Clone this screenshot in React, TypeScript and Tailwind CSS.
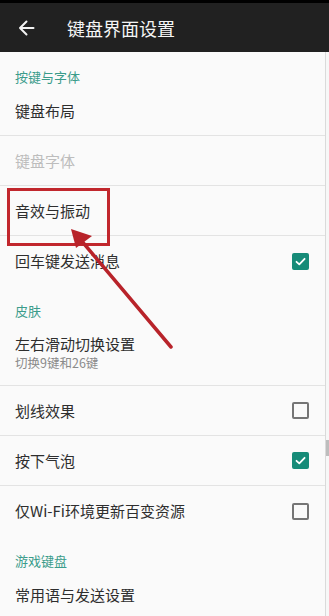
import React from "react";

const FONT = { fontFamily: '"Noto Sans CJK SC", "Noto Sans", sans-serif' };

function Check({ on }: { on: boolean }) {
  if (on) {
    return (
      <div className="w-[17px] h-[17px] rounded-[2px] bg-[#168b78] flex items-center justify-center">
        <svg width="13" height="13" viewBox="0 0 13 13">
          <path d="M2.5 6.8 L5.3 9.4 L10.6 3.8" fill="none" stroke="#fff" strokeWidth="1.8" strokeLinecap="round" strokeLinejoin="round" />
        </svg>
      </div>
    );
  }
  return <div className="w-[17px] h-[17px] rounded-[2px] border-2 border-[#757575]" />;
}

function Section({ title }: { title: string }) {
  return (
    <div className="pt-4 px-[15px] h-[34px]">
      <div className="text-[13px] leading-[18px] text-[#3b9c8b]">{title}</div>
    </div>
  );
}

function Row({
  title,
  sub,
  check,
  disabled,
  divider = true,
}: {
  title: string;
  sub?: string;
  check?: boolean;
  disabled?: boolean;
  divider?: boolean;
}) {
  return (
    <div
      className={
        "flex items-center justify-between pl-[15px] pr-[16px] " +
        (sub ? "h-[66px] " : "h-[50px] ") +
        (divider ? "border-b border-[#e3e3e3]" : "")
      }
    >
      <div className="flex flex-col">
        <div className={"text-[15px] leading-[20px] " + (disabled ? "text-[#bdbdbd]" : "text-[#2e2e2e]")}>{title}</div>
        {sub && <div className="text-[12.5px] leading-[16px] text-[#8a8a8a] mt-px">{sub}</div>}
      </div>
      {check !== undefined && <Check on={check} />}
    </div>
  );
}

export default function App() {
  return (
    <div className="relative w-[329px] h-[616px] overflow-hidden bg-[#fafafa]" style={FONT}>
      <div className="h-[52px] bg-[#212121] border-t-[3px] border-black flex items-center">
        <div className="w-[67px] pl-[18px] flex items-center">
          <svg width="17" height="16" viewBox="0 0 17 16">
            <path d="M15.5 8 H2 M8.5 1.5 L2 8 L8.5 14.5" fill="none" stroke="#f2f2f2" strokeWidth="2" strokeLinecap="round" strokeLinejoin="round" />
          </svg>
        </div>
        <div className="text-[18px] leading-[24px] text-[#f5f5f5]">键盘界面设置</div>
      </div>
      <div className="flex">
        <div className="w-[325px]">
          <Section title="按键与字体" />
          <Row title="键盘布局" />
          <Row title="键盘字体" disabled />
          <Row title="音效与振动" />
          <Row title="回车键发送消息" check={true} divider={false} />
          <Section title="皮肤" />
          <Row title="左右滑动切换设置" sub="切换9键和26键" />
          <Row title="划线效果" check={false} />
          <Row title="按下气泡" check={true} />
          <Row title="仅Wi-Fi环境更新百变资源" check={false} divider={false} />
          <Section title="游戏键盘" />
          <Row title="常用语与发送设置" divider={false} />
        </div>
        <div className="relative w-[4px] h-[564px] border-l border-[#dadada] bg-[#f7f7f7]">
          <div className="absolute left-0 top-[388px] w-[3px] h-[16px] bg-[#bdbdbd]" />
        </div>
      </div>
      {/* annotation */}
      <div className="absolute left-[7px] top-[188px] w-[103px] h-[58px] border-[3.5px] border-[#c1272d]" />
      <svg className="absolute left-0 top-0" width="329" height="616" viewBox="0 0 329 616">
        <line x1="80" y1="239" x2="171" y2="347" stroke="#b8232a" strokeWidth="3.5" strokeLinecap="round" />
        <polygon points="71,229 92,236 76,248" fill="#b8232a" />
      </svg>
    </div>
  );
}
